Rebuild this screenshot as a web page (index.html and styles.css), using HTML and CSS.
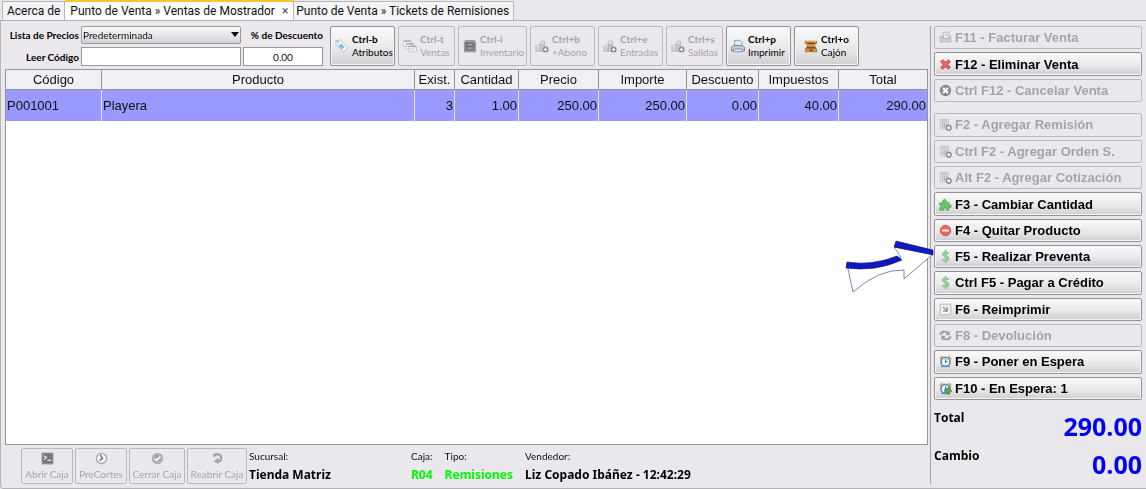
FILE: index.html
```html
<!DOCTYPE html>
<html lang="es">
<head>
<meta charset="utf-8">
<title>Punto de Venta</title>
<link rel="stylesheet" href="styles.css">
</head>
<body>
<svg class="sprite" aria-hidden="true">
  <symbol id="boxes" viewBox="0 0 16 16"><path d="M6 3q2.500-2 5 0v5H6zM1 8q2.500-2 5 0v6H1zM6 8q2.500-2 5 0v6H6z" fill="#d2d1d4" stroke="#b5b4b7"/><path d="M6.500 3.500h4M1.500 8.500h4" stroke="#eee"/><circle cx="12" cy="12" r="3.500" fill="#8d8c90"/><path d="M10 12h4M12 10v4" stroke="#fff" stroke-width="1.300"/></symbol>
  <symbol id="calc" viewBox="0 0 16 16"><path d="M1.500 1.500h10v12h-10z" fill="#e4e3e6" stroke="#bdbcbf"/><path d="M3 4h7M4.500 6v6M7 6v6M9.500 6v4" stroke="#aaa9ad" stroke-width="1.300"/><circle cx="12" cy="12" r="3" fill="#eee" stroke="#88878b" stroke-width="1.600"/></symbol>
  <symbol id="dollar" viewBox="0 0 16 16"><path d="M12 4.500C10.500 2.500 5 2.300 5 5.300c0 3 6.500 2 6.500 5.200 0 3.200-5.500 3-7.500.8M8.200 0v16" fill="none" stroke="#8bcb91" stroke-width="2.500"/></symbol>
  <symbol id="clock" viewBox="0 0 16 16"><path d="M1 5 4.500 1.500M15 5l-3.500-3.500" stroke="#eeb64b" stroke-width="3"/><path d="m3 15 2-2m8 2-2-2" stroke="#666" stroke-width="1.500"/><circle cx="8" cy="8.500" r="5.500" fill="#f5faff" stroke="#5d91c8" stroke-width="2.200"/><path d="M8 5v4l2.500-1.500" fill="none" stroke="#49759f" stroke-width="1.300"/></symbol>
</svg>
<div class="app">
  <nav class="tabs">
    <button class="tab tab-about">Acerca de</button>
    <button class="tab tab-active">Punto de Venta » Ventas de Mostrador<span class="close">×</span></button>
    <button class="tab">Punto de Venta » Tickets de Remisiones</button>
  </nav>
  <div class="panel">
    <main class="main">
      <div class="toolbar">
        <form class="entry">
          <label for="lista">Lista de Precios</label>
          <span class="combo">
            <select id="lista"><option>Predeterminada</option></select>
            <svg class="combo-arrow" viewBox="0 0 8 5"><path d="M0 0h8L4 5z"/></svg>
          </span>
          <label for="desc">% de Descuento</label>
          <label for="codigo">Leer Código</label>
          <input id="codigo" type="text" autofocus>
          <input id="desc" class="discount" type="text" value="0.00">
        </form>
        <div class="tools">
          <button class="tool wide">
            <svg viewBox="0 0 16 16"><path d="m1 2 5-1 9 9-5 5-9-9z" fill="#f4f7fa" stroke="#aab3bd"/><path d="m7 5 4 4-3 3-4-4z" fill="#70bdf0"/><circle cx="3.500" cy="3.500" r="1" fill="#909ba5"/></svg>
            <span><b>Ctrl-b</b>Atributos</span>
          </button>
          <button class="tool narrow" disabled>
            <svg viewBox="0 0 16 16"><path d="M.5 2.500h9v6h-9zM3.500 5.500h9v6h-9zM6.500 8.500h9v6h-9z" fill="#f6f6f7" stroke="#c5c4c7"/><path d="M1 2.500h8M4 5.500h8M7 8.500h8" stroke="#a3a2a5" stroke-width="1.500"/></svg>
            <span><b>Ctrl-t</b>Ventas</span>
          </button>
          <button class="tool widest" disabled>
            <svg viewBox="0 0 16 16"><path d="m3 1h10l2 2v12H1V3z" fill="#9a999d"/><path d="M3.500 4.500h9v8h-9zM4 8.500h8" fill="#858488" stroke="#68676b"/><path d="M6 6.500h4M6 10.500h4" stroke="#bbb"/></svg>
            <span><b>Ctrl-i</b>Inventario</span>
          </button>
          <button class="tool wide" disabled><svg><use href="#boxes"/></svg><span><b>Ctrl+b</b>+Abono</span></button>
          <button class="tool wide" disabled><svg><use href="#boxes"/></svg><span><b>Ctrl+e</b>Entradas</span></button>
          <button class="tool narrow" disabled><svg><use href="#boxes"/></svg><span><b>Ctrl+s</b>Salidas</span></button>
          <button class="tool wide">
            <svg viewBox="0 0 16 16"><path d="M4 8V1.500h6L12.500 4v4" fill="#d5ebfc" stroke="#6a9fd0"/><path d="M2.500 7.500h11l2 2v4H.5v-4z" fill="#c9cbd0" stroke="#73767e"/><path d="M3 11.500h10v3H3z" fill="#eef5fd" stroke="#668ab2"/></svg>
            <span><b>Ctrl+p</b>Imprimir</span>
          </button>
          <button class="tool wide drawer">
            <svg viewBox="0 0 16 16"><path d="M1 2h14v3l-2 1v3l2 2v4H1v-4l2-2V6L1 5z" fill="#b77b35"/><path d="M2 3h12M3 7h10M2 13h12" stroke="#e1ad61" stroke-width="1.500"/><path d="M4 5h8M3 10h10M6 13h4" stroke="#70431b" stroke-width="1.300"/></svg>
            <span><b>Ctrl+o</b>Cajón</span>
          </button>
        </div>
      </div>
      <div class="grid">
        <table>
          <colgroup><col class="c-code"><col><col class="c-exist"><col class="c-qty"><col class="c-price"><col class="c-amount"><col class="c-disc"><col class="c-price"><col class="c-total"></colgroup>
          <thead><tr><th>Código</th><th>Producto</th><th>Exist.</th><th>Cantidad</th><th>Precio</th><th>Importe</th><th>Descuento</th><th>Impuestos</th><th>Total</th></tr></thead>
          <tbody><tr><td>P001001</td><td>Playera</td><td class="num">3</td><td class="num">1.00</td><td class="num">250.00</td><td class="num">250.00</td><td class="num">0.00</td><td class="num">40.00</td><td class="num">290.00</td></tr></tbody>
        </table>
      </div>
      <footer class="status">
        <div class="cash">
          <button class="cash-btn" disabled><svg viewBox="0 0 14 14"><path d="M1 1h12v12H1z" fill="#77767a" stroke="#aaa9ad"/><path d="m3 4 3 2-3 2M7 9h4" fill="none" stroke="#eee" stroke-width="1.300"/></svg>Abrir Caja</button>
          <button class="cash-btn" disabled><svg viewBox="0 0 14 14"><circle cx="7" cy="7" r="5.500" fill="#f6f6f6" stroke="#aaa9ad" stroke-width="1.500"/><path d="m6 3 2 4-3 2" fill="none" stroke="#68676b" stroke-width="1.500"/></svg>PreCortes</button>
          <button class="cash-btn" disabled><svg viewBox="0 0 14 14"><circle cx="7" cy="7" r="6" fill="#a3a2a6"/><circle cx="7" cy="7" r="4.500" fill="none" stroke="#c4c3c6"/><path d="m4 7 2 2 4-4" fill="none" stroke="#fff" stroke-width="1.700"/></svg>Cerrar Caja</button>
          <button class="cash-btn cash-last" disabled><svg viewBox="0 0 14 14"><path d="M3 5c1-4 9-3 8 2-.5 3-3 4-5 3" fill="none" stroke="#a3a2a6" stroke-width="2.600"/><path d="M8 6v7L3 10z" fill="#a3a2a6"/></svg>Reabrir Caja</button>
        </div>
        <dl class="info">
          <div class="info-branch"><dt>Sucursal:</dt><dd>Tienda Matriz</dd></div>
          <div><dt>Caja:</dt><dd class="green">R04</dd></div>
          <div><dt>Tipo:</dt><dd class="green">Remisiones</dd></div>
          <div><dt>Vendedor:</dt><dd>Liz Copado Ibáñez - 12:42:29</dd></div>
        </dl>
      </footer>
    </main>
    <aside class="side">
      <div class="actions">
        <button class="action" disabled><svg viewBox="0 0 16 16"><path d="M5.500 1.500h7v8h-7z" fill="#eee" stroke="#b2b1b5"/><path d="M1.500 6.500h3v3h8v-3h2v7h-13z" fill="#d3d2d5" stroke="#adacb0"/><path d="M7 4h4M7 6h4" stroke="#bbb"/></svg>F11 - Facturar Venta</button>
        <button class="action"><svg viewBox="0 0 16 16"><path d="m3 3 10 10M13 3 3 13" stroke="#c94747" stroke-width="4.500"/><path d="m3.500 3.500 9 9m0-9-9 9" stroke="#ef6666" stroke-width="2.500"/></svg>F12 - Eliminar Venta</button>
        <button class="action" disabled><svg viewBox="0 0 16 16"><circle cx="8" cy="8" r="7" fill="#8b8a8e"/><path d="m5 5 6 6m0-6-6 6" stroke="#fff" stroke-width="2.600"/></svg>Ctrl F12 - Cancelar Venta</button>
        <button class="action group-start" disabled><svg><use href="#calc"/></svg>F2 - Agregar Remisión</button>
        <button class="action" disabled><svg><use href="#calc"/></svg>Ctrl F2 - Agregar Orden S.</button>
        <button class="action" disabled><svg><use href="#calc"/></svg>Alt F2 - Agregar Cotización</button>
        <button class="action"><svg viewBox="0 0 16 16"><path d="M1 6h4C3 1 10 0 8.500 5.500H12v2.500c4-1 4 5 0 4v3H9c1-4-4-4-3 0H1v-3.500c3 0 3-2.500 0-2.500z" fill="#6cc46c" stroke="#4d9f52"/></svg>F3 - Cambiar Cantidad</button>
        <button class="action"><svg viewBox="0 0 16 16"><circle cx="8" cy="8" r="6.500" fill="#e96459" stroke="#cb5148"/><path d="M4 8h8" stroke="#fff" stroke-width="2.600"/></svg>F4 - Quitar Producto</button>
        <div class="pointed">
          <button class="action"><svg><use href="#dollar"/></svg>F5 - Realizar Preventa</button>
          <svg class="pointer" viewBox="0 0 90 54" aria-hidden="true">
            <path d="M3 24Q25 32 57 17L50 7l39 7-29 25v-9Q35 29 9 52z" fill="#fff" stroke="#6264b4" stroke-width=".8"/>
            <path d="M3 22q25 4 50-6l5 4Q32 32 2 28zM52 1l37 9v5L50 7z" fill="#1019c0" stroke="#101058" stroke-width=".6"/>
          </svg>
        </div>
        <button class="action"><svg><use href="#dollar"/></svg>Ctrl F5 - Pagar a Crédito</button>
        <button class="action"><svg viewBox="0 0 16 16"><path d="M1.500 1.500h13v13h-13z" fill="#f3f3f4" stroke="#aeadb0"/><path d="m5 5 5 5m0-5v5H5" fill="none" stroke="#909094" stroke-width="1.700"/></svg>F6 - Reimprimir</button>
        <button class="action" disabled><svg viewBox="0 0 16 16"><path d="M2 7c0-4 7-5 9-2m3 4c0 4-7 5-9 2" fill="none" stroke="#9b9a9e" stroke-width="2.400"/><path d="M13 2v6L8 7zM3 14V8l5 1z" fill="#9b9a9e"/></svg>F8 - Devolución</button>
        <button class="action"><svg><use href="#clock"/></svg>F9 - Poner en Espera</button>
        <button class="action"><svg viewBox="0 0 16 16"><use href="#clock"/><path d="M7 9h4V6l5 5-5 5v-3H7z" fill="#60ad48" stroke="#39813a" stroke-width=".7"/></svg>F10 - En Espera: 1</button>
      </div>
      <dl class="totals">
        <div><dt>Total</dt><dd>290.00</dd></div>
        <div><dt>Cambio</dt><dd>0.00</dd></div>
      </dl>
    </aside>
  </div>
</div>
</body>
</html>
```

FILE: styles.css
```css
* { box-sizing: border-box; }
body {
  margin: 0;
  background: #ebe8ed;
  color: #111;
  font-family: "Open Sans", "Noto Sans", sans-serif;
  font-size: 12px;
}
button, input, select { font: inherit; color: inherit; margin: 0; }
dl, dd { margin: 0; }
.sprite { position: absolute; width: 0; height: 0; }
.app { min-height: 100vh; display: flex; flex-direction: column; }

.tabs { display: flex; padding-left: 2px; height: 20px; font-family: Roboto, sans-serif; }
.tab {
  border: 1px solid #b9b7bb;
  border-width: 1px 1px 0 0;
  background: #f4f3f5;
  padding: 0 4px 0 2px;
  line-height: 18px;
  margin-top: 1px;
  white-space: nowrap;
}
.tab-about { border-left-width: 1px; padding: 0 4px; }
.tab-active { background: #fff; border-top: 2px solid #fcc331; margin-top: 0; padding: 0 5px; }
.close { margin-left: 7px; color: #555; }

.panel {
  flex: 1;
  display: flex;
  border: 1px solid #b5b3b8;
  border-right: 0;
  border-radius: 0 0 0 4px;
  padding: 5px 4px 0;
}
.main { flex: 1; min-width: 0; display: flex; flex-direction: column; padding-right: 2px; }
.toolbar { display: flex; align-items: stretch; gap: 7px; height: 40px; font-family: Lato, sans-serif; }
.entry {
  display: grid;
  grid-template-columns: 74px 160px 80px;
  grid-template-rows: 18px 19px;
  gap: 3px 2px;
  align-items: center;
  font-size: 10px;
}
.entry label { text-align: right; font-weight: 700; white-space: nowrap; color: #000; }
.entry input { width: 100%; height: 19px; border: 1px solid #9a989d; background: #fff; padding: 0 2px; outline: 0; }
.entry .discount { text-align: center; }
.combo { position: relative; display: block; height: 18px; }
.combo select {
  appearance: none;
  width: 100%;
  height: 18px;
  border: 1px solid #9a989d;
  border-radius: 2px;
  background: linear-gradient(#fbfbfb, #d3d2d5);
  padding: 0 1px;
}
.combo-arrow { position: absolute; right: 2px; top: 6px; width: 8px; height: 5px; pointer-events: none; }

.tools { display: flex; gap: 3px; }
.tool, .cash-btn, .action {
  border: 1px solid #949297;
  border-radius: 2px;
  background: linear-gradient(#fafafb, #e9e8ea 55%, #cfced1);
  box-shadow: inset 0 0 0 1px #f5f4f6;
  white-space: nowrap;
  color: #000;
}
.tool:disabled, .cash-btn:disabled, .action:disabled {
  background: #ebe8ed;
  border-color: #bbb9be;
  box-shadow: none;
  color: #a5a3a8;
}
.tool { display: flex; align-items: center; gap: 3px; padding: 0 0 0 4px; text-align: left; font-size: 10px; line-height: 13px; }
.tool svg { width: 14px; height: 14px; flex: none; }
.tool b { display: block; }
.narrow { width: 57px; }
.wide { width: 65px; }
.widest { width: 69px; }
.drawer { padding-left: 9px; }

.grid { flex: 1; margin-top: 3px; background: #fff; border: 1px solid #97959a; }
table { width: 100%; table-layout: fixed; border-collapse: separate; border-spacing: 0; font: 13px "Liberation Sans", sans-serif; }
th { height: 20px; padding: 0; font-weight: 400; background: #f0eff1; border-right: 1px solid #97959a; border-bottom: 1px solid #97959a; }
td { height: 31px; padding: 0 1px; background: #9999ff; border-right: 1px solid #e0e0ff; }
th:last-child, td:last-child { border-right: 0; }
.num { text-align: right; }
.c-code { width: 96px; }
.c-exist { width: 40px; }
.c-qty { width: 64px; }
.c-price { width: 80px; }
.c-amount { width: 88px; }
.c-disc { width: 72px; }
.c-total { width: 88px; }

.status { display: flex; gap: 2px; height: 43px; padding: 3px 0 4px 16px; }
.cash { display: flex; gap: 2px; font-family: Lato, sans-serif; }
.cash-btn { display: flex; flex-direction: column; align-items: center; justify-content: center; gap: 2px; padding: 0; width: 52px; font-size: 10px; line-height: 14px; }
.cash-btn:nth-child(3) { width: 56px; }
.cash-last { width: 60px; }
.cash-btn svg { width: 13px; height: 13px; }
.info { display: flex; gap: 12px; white-space: nowrap; }
.info-branch { width: 150px; }
.info dt { font-family: Lato, sans-serif; font-size: 10px; line-height: 17px; }
.info dd { font-family: "Noto Sans", sans-serif; font-size: 12px; line-height: 20px; font-weight: 700; color: #000; }
.info .green { color: #00fa00; }

.side { width: 212px; flex: none; display: flex; flex-direction: column; border-left: 1px solid #a5a3a8; padding-left: 3px; margin-bottom: 4px; }
.actions { flex: 1; display: flex; flex-direction: column; gap: 3px; }
.action {
  flex: 1;
  display: flex;
  align-items: center;
  gap: 3px;
  width: 100%;
  min-height: 23px;
  padding: 0 4px;
  font: bold 13px "Liberation Sans", sans-serif;
}
.action svg { width: 13px; height: 13px; flex: none; }
.group-start { margin-top: 8px; }
.pointed { flex: 1; display: flex; position: relative; }
.pointer { position: absolute; right: 100%; top: -5px; width: 90px; height: 54px; pointer-events: none; }
.totals { padding-top: 8px; }
.totals div { display: flex; justify-content: space-between; height: 38px; }
.totals dt { font-weight: 700; line-height: 19px; color: #000; }
.totals dd { font-size: 25px; line-height: 36px; font-weight: 700; color: #0000f5; }
```
